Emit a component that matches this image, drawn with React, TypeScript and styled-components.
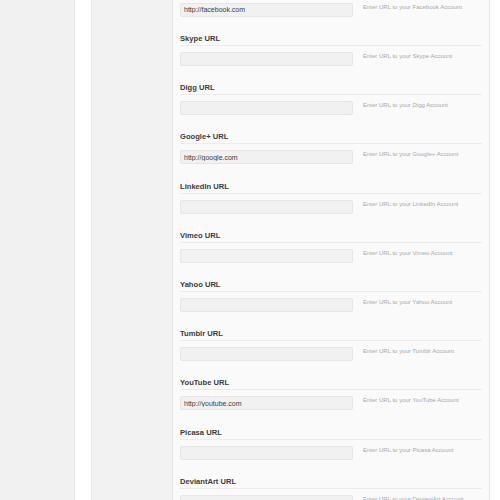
import React from "react";
import styled, { createGlobalStyle } from "styled-components";

const GlobalStyle = createGlobalStyle`
    html, body {
        margin: 0;
        padding: 0;
        background: #ffffff;
    }

    body {
        font-family: "Liberation Sans", Arial, sans-serif;
        overflow: hidden;
    }
`;

const Page = styled.div`
    display: flex;
    height: 500px;
    overflow: hidden;
`;

const Sidebar = styled.div`
    width: 74px;
    flex-shrink: 0;
    background: #f1f1f1;
    border-right: 1px solid #e6e6e6;
`;

const Gutter = styled.div`
    width: 16px;
    flex-shrink: 0;
    background: #ffffff;
`;

const TabPanel = styled.div`
    width: 80px;
    flex-shrink: 0;
    background: #f2f2f2;
    border-left: 1px solid #ebebeb;
    border-right: 1px solid #e5e5e5;
`;

const Content = styled.div`
    width: 302px;
    flex-shrink: 0;
    padding: 0 7px;
    background: #fafafa;
    border-right: 1px solid #e6e6e6;
`;

const List = styled.ul`
    list-style: none;
    margin: -17.2px 0 0;
    padding: 0;
`;

const Row = styled.li`
    height: 49.2px;
    box-sizing: border-box;
    display: flex;
    flex-direction: column;
`;

const Label = styled.label`
    height: 11px;
    padding-top: 1px;
    line-height: 11px;
    font-size: 7.6px;
    font-weight: bold;
    color: #3a3a3a;
    margin-bottom: 2px;
    padding-bottom: 1px;
    border-bottom: 1px solid #ececec;
    box-sizing: content-box;
`;

const Field = styled.div`
    display: flex;
    align-items: flex-start;
    gap: 10px;
    margin-top: 4px;
`;

const Input = styled.input`
    width: 173px;
    height: 14px;
    box-sizing: border-box;
    margin: 0;
    padding: 0 3px;
    font-family: "Liberation Sans", Arial, sans-serif;
    font-size: 7px;
    color: #3c3c3c;
    background: #f1f1f1;
    border: 1px solid #e6e6e6;
    border-radius: 2px;
    outline: none;
`;

const Hint = styled.span`
    font-size: 6px;
    line-height: 7px;
    margin-top: 1px;
    color: #a9a9a9;
    white-space: nowrap;
`;

const accounts = [
    { name: "Facebook", value: "http://facebook.com" },
    { name: "Skype", value: "" },
    { name: "Digg", value: "" },
    { name: "Google+", value: "http://google.com" },
    { name: "LinkedIn", value: "" },
    { name: "Vimeo", value: "" },
    { name: "Yahoo", value: "" },
    { name: "Tumblr", value: "" },
    { name: "YouTube", value: "http://youtube.com" },
    { name: "Picasa", value: "" },
    { name: "DeviantArt", value: "" },
];

export default function App() {
    return (
        <>
            <GlobalStyle />
            <Page>
                <Sidebar />
                <Gutter />
                <TabPanel />
                <Content>
                    <List>
                        {accounts.map(({ name, value }) => (
                            <Row key={name}>
                                <Label>{name} URL</Label>
                                <Field>
                                    <Input defaultValue={value} />
                                    <Hint>
                                        Enter URL to your {name} Account
                                    </Hint>
                                </Field>
                            </Row>
                        ))}
                    </List>
                </Content>
            </Page>
        </>
    );
}
